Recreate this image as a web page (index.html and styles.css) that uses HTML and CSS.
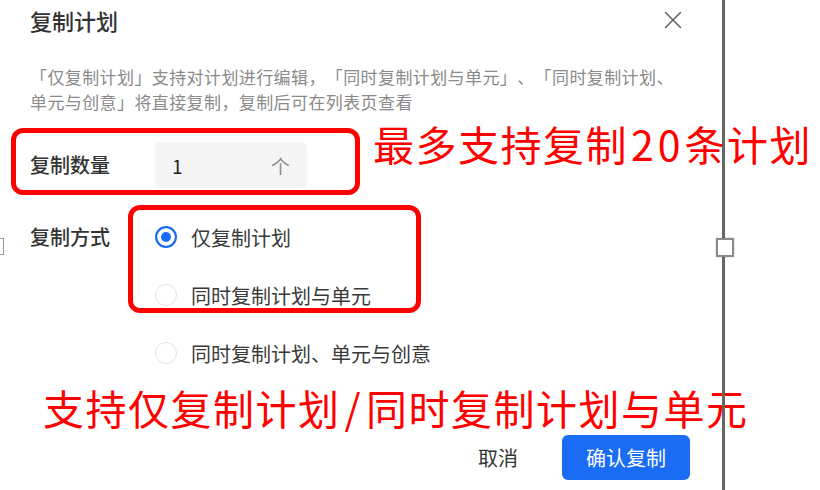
FILE: index.html
```html
<!DOCTYPE html>
<html lang="zh-CN">
<head>
<meta charset="utf-8">
<title>复制计划</title>
<link rel="stylesheet" href="styles.css">
</head>
<body>
<div class="page">
  <section class="dialog">
    <header class="head">
      <h1 class="title">复制计划</h1>
      <button class="close" aria-label="关闭">
        <svg width="18" height="18" viewBox="0 0 18 18"><path d="M1.5 1.5 L16.5 16.5 M16.5 1.5 L1.5 16.5" stroke="#666" stroke-width="1.6" fill="none" stroke-linecap="round"/></svg>
      </button>
    </header>
    <p class="desc">「仅复制计划」支持对计划进行编辑，「同时复制计划与单元」、「同时复制计划、<br>单元与创意」将直接复制，复制后可在列表页查看</p>

    <div class="row row-count">
      <span class="label">复制数量</span>
      <div class="input"><span class="val">1</span><span class="unit">个</span></div>
      <span class="note note-1">最多支持复制<span class="num">20</span>条计划</span>
      <span class="mark mark-1"></span>
    </div>

    <div class="row row-mode">
      <span class="label">复制方式</span>
      <div class="radios">
        <label class="radio checked"><span class="dot"></span><span>仅复制计划</span></label>
        <label class="radio"><span class="dot"></span><span>同时复制计划与单元</span></label>
        <label class="radio"><span class="dot"></span><span>同时复制计划、单元与创意</span></label>
      </div>
      <span class="mark mark-2"></span>
    </div>

    <p class="note note-2">支持仅复制计划<span class="slash">/</span>同时复制计划与单元</p>

    <footer class="foot">
      <button class="btn-cancel">取消</button>
      <button class="btn-primary">确认复制</button>
    </footer>
  </section>
  <div class="divider"><span class="handle"></span></div>
  <span class="edge-handle"></span>
</div>
</body>
</html>
```

FILE: styles.css
```css
* { box-sizing: border-box; }
html, body { margin: 0; padding: 0; background: #fff; }
body {
  font-family: "Noto Sans CJK SC", "Noto Sans", sans-serif;
  color: #333;
  overflow: hidden;
  text-spacing-trim: space-all;
}
.page {
  position: relative;
  display: flex;
  width: 820px;
  height: 490px;
}
.dialog {
  width: 722px;
  flex: none;
  padding-left: 30px;
}
.head {
  display: flex;
  justify-content: space-between;
  align-items: center;
  height: 40px;
}
.title {
  margin: 0;
  font-size: 22px;
  line-height: 40px;
  font-weight: 500;
  color: #333;
}
.close {
  display: flex;
  padding: 0;
  margin-right: 40px;
  border: 0;
  background: none;
}
.desc {
  margin: 24px 0 0;
  font-size: 17px;
  letter-spacing: 0.4px;
  line-height: 25px;
  color: #8a8a8a;
  white-space: nowrap;
  text-spacing-trim: space-all;
}
.row {
  position: relative;
  display: flex;
}
.label {
  width: 125px;
  flex: none;
  font-size: 20px;
  font-weight: 500;
  color: #333;
}
.row-count {
  margin-top: 28px;
  height: 46px;
  align-items: center;
}
.row-count .label { line-height: 46px; }
.input {
  width: 152px;
  height: 46px;
  flex: none;
  display: flex;
  align-items: center;
  justify-content: space-between;
  padding: 0 17px 0 17px;
  background: #f5f5f6;
  border-radius: 5px;
}
.val { font-size: 19px; color: #222; }
.unit { font-size: 19px; color: #8c8c8c; }
.note {
  color: #ff0000;
  font-size: 41px;
  letter-spacing: 1.5px;
  line-height: 46px;
  white-space: nowrap;
}
.note-1 {
  align-self: flex-start;
  margin: -22px 0 0 66px;
}
.num { letter-spacing: 4px; margin-left: 3px; }
.slash { margin: 0 4px; }
.mark {
  position: absolute;
  border: 5px solid #ff0000;
  border-radius: 12px;
  pointer-events: none;
}
.mark-1 { left: -19px; top: -14px; width: 349px; height: 67px; }
.row-mode { margin-top: 34px; align-items: flex-start; }
.row-mode .label { line-height: 30px; }
.radios {
  display: flex;
  flex-direction: column;
  gap: 28px;
}
.radio {
  display: flex;
  align-items: center;
  gap: 14px;
  height: 30px;
  font-size: 20px;
  color: #3a3a3a;
}
.dot {
  width: 22px;
  height: 22px;
  border-radius: 50%;
  border: 1px solid #e2e3e5;
  background: #fff;
  flex: none;
}
.radio.checked .dot {
  border: 2px solid #1a6cf5;
  box-shadow: inset 0 0 0 4px #fff;
  background: #1a6cf5;
}
.mark-2 { left: 98px; top: -17px; width: 293px; height: 108px; }
.note-2 { margin: 16px 0 0 13px; }
.foot {
  display: flex;
  justify-content: flex-end;
  align-items: center;
  margin-top: 5px;
  padding-right: 32px;
}
.btn-cancel {
  border: 0;
  background: none;
  padding: 0;
  margin-right: 44px;
  font-family: inherit;
  font-size: 20px;
  color: #333;
}
.btn-primary {
  width: 128px;
  height: 45px;
  border: 0;
  border-radius: 6px;
  background: #1a6cf5;
  color: #fff;
  font-family: inherit;
  font-size: 20px;
}
.divider {
  position: relative;
  width: 3px;
  height: 490px;
  flex: none;
  background: #666;
}
.handle {
  position: absolute;
  left: -6px;
  top: 238px;
  width: 18px;
  height: 19px;
  background: #fff;
  border: 2px solid #8a8a8a;
  box-shadow: 0 0 2px rgba(0,0,0,0.25);
}
.edge-handle {
  position: absolute;
  left: -12px;
  top: 238px;
  width: 16px;
  height: 17px;
  border: 1px solid #999;
  background: #fff;
}
```
